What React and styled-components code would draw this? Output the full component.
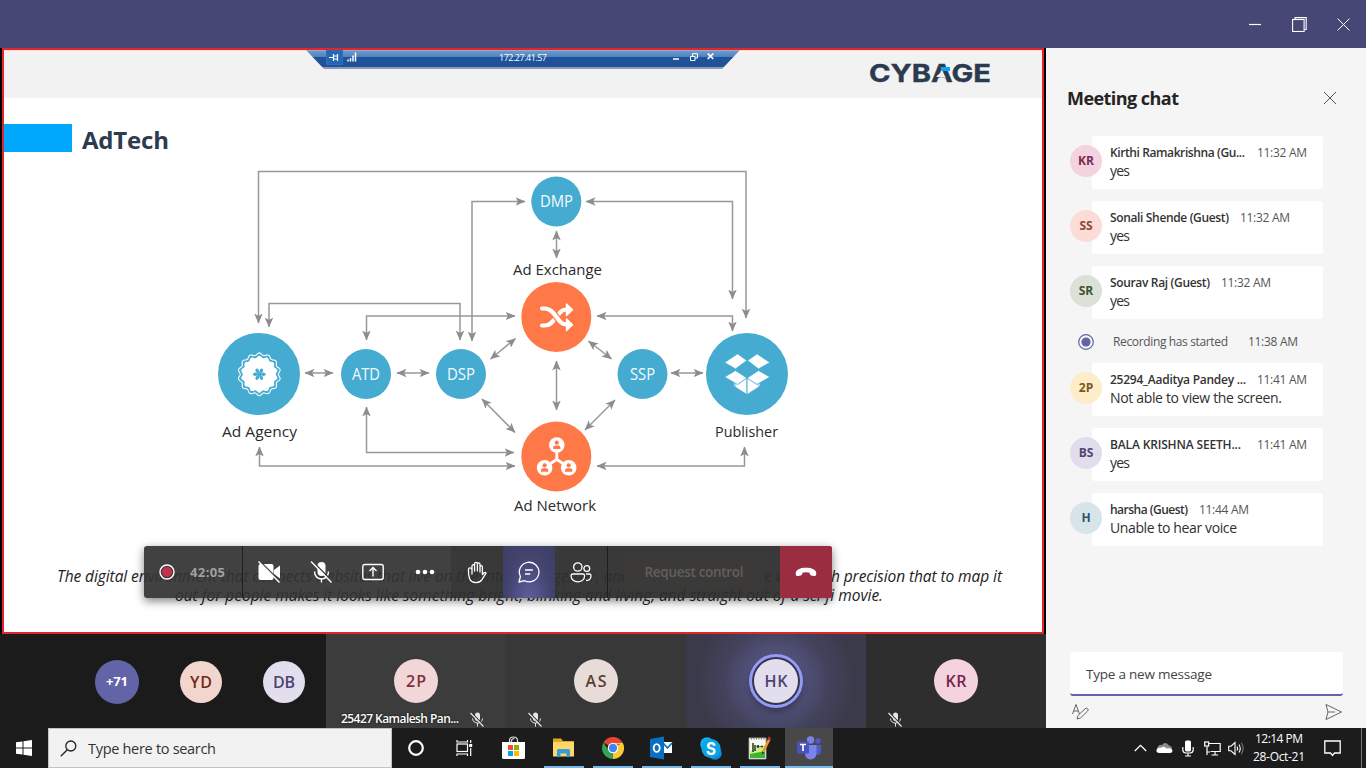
import React, { useLayoutEffect, useRef } from "react";
import styled, { createGlobalStyle, css } from "styled-components";

const sans = `"Open Sans", "Noto Sans", "Liberation Sans", sans-serif`;

const Global = createGlobalStyle`
  * { box-sizing: border-box; }
  body { margin: 0; background: #000; font-family: ${sans}; overflow: hidden; }
  svg { display: block; }
`;

/* Text tracked out (or in) so that it fills the given width. */
const TextLine = styled.span`
  display: inline-block;
  white-space: pre;
  flex: none;
  font-size: ${(p) => p.$size}px;
  font-weight: ${(p) => p.$weight || 400};
  font-style: ${(p) => (p.$italic ? "italic" : "normal")};
  color: ${(p) => p.$color || "inherit"};
  line-height: ${(p) => p.$line || p.$size + 4}px;
`;

function Fit({ width, children, ...rest }) {
  const ref = useRef(null);
  useLayoutEffect(() => {
    const el = ref.current;
    el.style.letterSpacing = "0px";
    const natural = el.getBoundingClientRect().width;
    el.style.letterSpacing = `${(width - natural) / Math.max(1, children.length - 1)}px`;
    el.style.marginRight = `${-(width - natural) / Math.max(1, children.length - 1)}px`;
  }, [width, children]);
  return (
    <TextLine ref={ref} {...rest}>
      {children}
    </TextLine>
  );
}

const Screen = styled.div`
  width: 1366px;
  height: 768px;
  display: grid;
  grid-template-rows: 48px 680px 40px;
`;

/* ---------- title bar ---------- */
const TitleBar = styled.header`
  background: #464775;
  display: flex;
  justify-content: flex-end;
  align-items: center;
  gap: 30px;
  padding-right: 16px;
`;

const Workspace = styled.main`
  display: grid;
  grid-template-columns: 1046px 320px;
`;

const Stage = styled.section`
  display: grid;
  grid-template-rows: 586px 94px;
  min-width: 0;
`;

const SharedFrame = styled.div`
  background: #000;
  padding: 0 2px;
`;

const Slide = styled.article`
  position: relative;
  height: 586px;
  border: 2px solid #e0262b;
  background: #fff;
  overflow: hidden;
  display: flex;
  flex-direction: column;
`;

const SlideHeader = styled.div`
  height: 48px;
  flex: none;
  background: #f2f2f2;
  box-shadow: inset 0 1px #f7dcdc;
  display: flex;
  justify-content: flex-end;
  padding: 6px 50px 0 0;
`;

const SlideTitle = styled.div`
  height: 54px;
  margin-top: 26px;
  flex: none;
  display: flex;
  align-items: flex-start;
  gap: 10px;
`;
const TitleAccent = styled.i`
  width: 68px;
  height: 28px;
  background: #00a8fb;
`;

const DiagramArea = styled.div`
  margin-top: -18px;
  height: 380px;
  flex: none;
`;

const Caption = styled.div`
  margin-top: 27px;
  display: flex;
  flex-direction: column;
  align-items: flex-start;
`;
const CaptionRow = styled.div`
  display: flex;
  height: 19px;
  padding-left: ${(p) => p.$indent}px;
`;

/* ---------- remote desktop bar ---------- */
const RemoteBar = styled.div`
  position: absolute;
  left: 302px;
  top: 0;
  width: 434px;
  height: 19px;
  clip-path: polygon(0 0, 100% 0, 416px 100%, 18px 100%);
  background: linear-gradient(#a2a6c4 0 1px, #6a9bd0 1px, #4b82bf 7px, #20529a 7px, #20529a 17px, #8e99b8 17px);
  display: flex;
  align-items: flex-start;
  color: #fff;
`;
const RemotePin = styled.span`
  margin-left: 20px;
  width: 17px;
  height: 15px;
  display: grid;
  place-items: center;
  border: 1px solid #2d6fbd;
  background: #2467b3;
`;
const RemoteSlot = styled.span`
  display: flex;
  margin-left: ${(p) => p.$gap}px;
  margin-top: ${(p) => p.$top}px;
`;

/* ---------- call controls ---------- */
const CallBar = styled.div`
  position: absolute;
  left: 140px;
  top: 496px;
  width: 688px;
  height: 52px;
  display: flex;
  border-radius: 3px;
  overflow: hidden;
  background: rgba(51, 51, 51, 0.93);
  box-shadow: 0 3px 10px rgba(0, 0, 0, 0.5);
`;
const RecordStatus = styled.div`
  width: 99px;
  border-right: 1px solid #1e1e1e;
  display: flex;
  align-items: center;
  gap: 15px;
  padding-left: 15px;
`;
const CallButton = styled.div`
  width: 52px;
  display: grid;
  place-items: center;
  ${(p) => p.$dim && css`background: rgba(40, 40, 40, 0.3);`}
  ${(p) => p.$active && css`background: radial-gradient(ellipse at 50% 110%, #5f5fa0, #43446f 60%, #3d3e62);`}
  ${(p) => p.$danger && css`background: #9b2d41;`}
`;
const ControlRequest = styled.div`
  width: 173px;
  border-left: 1px solid #1e1e1e;
  background: rgba(40, 40, 40, 0.3);
  padding: 10px 16px;
`;
const RequestButton = styled.div`
  height: 32px;
  background: #3b3a39;
  border-radius: 3px;
  display: grid;
  place-items: center;
  padding-top: 2px;
`;

/* ---------- participants ---------- */
const Gallery = styled.div`
  display: grid;
  grid-template-columns: 326px repeat(4, 180px);
`;
const Overflow = styled.div`
  background: #1b1b1b;
  display: flex;
  align-items: center;
  padding: 1px 0 0 95px;
  gap: 41px;
`;
const Tile = styled.div`
  height: 94px;
  background: ${(p) => p.$bg};
  display: flex;
  flex-direction: column;
  align-items: center;
  padding-top: 25px;
`;
const Avatar = styled.div`
  width: ${(p) => p.$d}px;
  height: ${(p) => p.$d}px;
  flex: none;
  border-radius: 50%;
  background: ${(p) => p.$bg};
  color: ${(p) => p.$fg};
  display: grid;
  place-items: center;
  ${(p) => p.$speaking && css`box-shadow: 0 0 0 2px #35354b, 0 0 0 5px #9599f7, 0 5px 10px 3px rgba(25, 25, 40, 0.6);`}
`;
const TileFooter = styled.div`
  align-self: stretch;
  display: flex;
  align-items: center;
  height: 16px;
  margin-top: 8px;
  padding-left: ${(p) => p.$indent}px;
  gap: 11px;
  text-shadow: 0 0 2px #000;
`;

/* ---------- chat ---------- */
const Chat = styled.aside`
  background: #f5f5f5;
  display: flex;
  flex-direction: column;
  padding: 0 23px 0 24px;
`;
const ChatHead = styled.div`
  height: 88px;
  display: flex;
  justify-content: space-between;
  align-items: flex-start;
  padding: 37px 6px 0 0;
  margin-left: -3px;
`;
const MessageList = styled.div`
  display: flex;
  flex-direction: column;
  gap: 12px;
`;
const Message = styled.div`
  display: flex;
  align-items: flex-start;
`;
const AvatarSlot = styled.div`
  width: 22px;
  padding-top: 9px;
  position: relative;
  z-index: 1;
`;
const Bubble = styled.div`
  width: 231px;
  height: 53px;
  background: #fff;
  border-radius: 3px;
  padding: 7px 0 0 18px;
  display: flex;
  flex-direction: column;
  align-items: flex-start;
`;
const MessageMeta = styled.div`
  display: flex;
  height: 19px;
`;
const TimeGap = styled.i`
  width: ${(p) => p.$w}px;
`;
const SystemNote = styled.div`
  height: 20px;
  display: flex;
  align-items: center;
  padding: 1px 0 0 8px;
`;
const Compose = styled.div`
  margin-top: auto;
  height: 76px;
`;
const ComposeInput = styled.div`
  display: flex;
  height: 44px;
  background: #fff;
  border-bottom: 2px solid #6264a7;
  border-radius: 3px;
  padding: 12px 0 0 16px;
`;
const ComposeTools = styled.div`
  display: flex;
  justify-content: space-between;
  padding: 7px 1px 0 2px;
`;

/* ---------- taskbar ---------- */
const Taskbar = styled.footer`
  background: #1c1c1c;
  display: flex;
  color: #fff;
`;
const TaskCell = styled.div`
  width: ${(p) => p.$w || 49}px;
  display: flex;
  align-items: center;
  justify-content: center;
  ${(p) => p.$running && css`
    background-image: linear-gradient(#76b9ed, #76b9ed);
    background-size: ${p.$focused ? "100%" : "40px"} 2px;
    background-position: ${p.$focused ? "0" : "5px"} bottom;
    background-repeat: no-repeat;
  `}
  ${(p) => p.$focused && css`
    background-color: #484848;
    margin-left: 1px;
  `}
`;
const SearchBox = styled.div`
  width: 344px;
  border: 1px solid #c2c2c2;
  background: #f2f2f2;
  display: flex;
  align-items: center;
  padding: 1px 0 0 11px;
  gap: 11px;
`;
const Tray = styled.div`
  margin-left: auto;
  display: flex;
  align-items: center;
  padding-right: 4px;
`;
const TrayItem = styled.span`
  margin-right: ${(p) => p.$after}px;
`;
const Clock = styled.div`
  display: flex;
  flex-direction: column;
  align-items: center;
  width: 52px;
  margin-right: 19px;
`;
const ShowDesktop = styled.i`
  width: 1px;
  align-self: stretch;
  background: #777;
`;

function Icon({ w, h, children, ...rest }) {
  return (
    <svg width={w} height={h} viewBox={`0 0 ${w} ${h}`} fill="none" stroke="currentColor" {...rest}>
      {children}
    </svg>
  );
}

/* ---------- diagram ---------- */
const BLUE = "#45abd0";
const ORANGE = "#ff7848";

const LINKS = [
  "M258.5 323V171.5H746V318",
  "M472 341V201.5H525",
  "M269 327V303.5H460V340",
  "M366.5 340V316H515",
  "M586 201.5H732.5V299",
  "M597 316H732.5V331",
  "M556.5 231V258",
  "M305 373H333",
  "M397 373H429",
  "M490.5 359L515.5 338.5",
  "M588.5 341L611.5 359",
  "M556.5 361V410",
  "M482 399L515 432.5",
  "M615 400L585 430",
  "M671 373H703",
  "M597 466H744.5V447",
  "M366.5 407V452.5H514",
  "M259.5 447V466H515",
];

function scallop(r, amp, n) {
  const pts = [];
  for (let i = 0; i <= 180; i++) {
    const a = (i / 180) * Math.PI * 2;
    const rr = r + amp * Math.cos(a * n);
    pts.push(`${(rr * Math.sin(a)).toFixed(2)} ${(-rr * Math.cos(a)).toFixed(2)}`);
  }
  return `M${pts.join("L")}Z`;
}

function NodeText({ x, y, w, children }) {
  return (
    <text x={x - w / 2} y={y} textLength={w} lengthAdjust="spacingAndGlyphs" fill="#f4fbfd" fontSize="16">
      {children}
    </text>
  );
}
function NodeLabel({ x, y, w, children }) {
  return (
    <text x={x} y={y} textLength={w} lengthAdjust="spacingAndGlyphs" fill="#2b2b2b" fontSize="15">
      {children}
    </text>
  );
}

function Person({ x, y }) {
  return (
    <g>
      <circle cx={x} cy={y} r="7.8" fill="#fff" />
      <circle cx={x} cy={y - 2.3} r="2.1" fill={ORANGE} />
      <path d={`M${x - 3.6} ${y + 4}v-1.6q0-1.8 1.8-1.8h3.6q1.8 0 1.8 1.8v1.6z`} fill={ORANGE} />
    </g>
  );
}

function Diagram() {
  return (
    <svg width="1038" height="380" viewBox="4 160 1038 380" fontFamily={sans}>
      <defs>
        <marker id="tip" markerUnits="userSpaceOnUse" markerWidth="12" markerHeight="12" refX="9.5" refY="5" orient="auto-start-reverse">
          <path d="M0 0.7L10 5L0 9.3L2.4 5Z" fill="#8d8d8d" />
        </marker>
      </defs>
      {LINKS.map((d) => (
        <path key={d} d={d} fill="none" stroke="#989898" strokeWidth="1.5" markerStart="url(#tip)" markerEnd="url(#tip)" />
      ))}
      <circle cx="259" cy="374" r="41" fill={BLUE} />
      <circle cx="366" cy="374" r="25" fill={BLUE} />
      <circle cx="461" cy="374" r="25" fill={BLUE} />
      <circle cx="642.5" cy="374" r="25" fill={BLUE} />
      <circle cx="556.3" cy="201.5" r="25" fill={BLUE} />
      <circle cx="747" cy="374" r="41" fill={BLUE} />
      <circle cx="556.3" cy="317" r="35" fill={ORANGE} />
      <circle cx="556.3" cy="456.5" r="35" fill={ORANGE} />

      <g transform="translate(259.3 374.3)">
        <path d={scallop(20.2, 1.1, 14)} fill="none" stroke="#fff" strokeWidth="1.1" />
        <path d={scallop(17.5, 1, 14)} fill="#fff" />
        {[0, 60, 120, 180, 240, 300].map((a) => (
          <ellipse key={a} cx="0" cy="-4" rx="1.7" ry="2.3" fill={BLUE} transform={`rotate(${a + 30})`} />
        ))}
        <circle r="2.2" fill={BLUE} />
      </g>

      <g fill="none" stroke="#fff" strokeWidth="4.2" strokeLinecap="round">
        <path d="M542 325.500h3c5 0 8-4 11.500-8.500s5-7.500 10-7.500h2" />
        <path d="M545 308.500c5 0 8 4 11.500 8.500s5 7.500 10 7.500" stroke={ORANGE} strokeWidth="6.500" strokeLinecap="butt" />
        <path d="M542 308.500h3c5 0 8 4 11.500 8.500s5 7.500 10 7.500h2" />
      </g>
      <path d="M566.500 304l6 5.700-6 5.700zM566.500 319l6 5.700-6 5.700z" fill="#fff" stroke="#fff" strokeWidth="1.400" strokeLinejoin="round" />

      <path d="M556.800 447V459.500L545 467M556.800 459.500L568.500 467" stroke="#fff" strokeWidth="2.800" fill="none" />
      <Person x={556.8} y={445} />
      <Person x={544.6} y={467.7} />
      <Person x={568.7} y={467.7} />

      <g fill="#fff" stroke={BLUE} strokeWidth="0.900">
        <path d="M733.500 379L746.700 387.500V394.800L733.500 386Z" />
        <path d="M760.500 379L747.300 387.500V394.800L760.500 386Z" />
        <path d="M735 379L747 378V394.500L735 387Z" />
        <path d="M759 379L747 378V394.500L759 387Z" />
        <path d="M737.500 353.800L747 360.500L735.500 369L724.500 362.500Z" />
        <path d="M757 353.800L747.500 360.500L758.500 369L770 362.500Z" />
        <path d="M735.500 370.500L747 378L737.500 384.500L724.500 377Z" />
        <path d="M758.500 370.500L747 378L757 384.500L770 377Z" />
      </g>

      <NodeText x={556.5} y={207} w={33}>DMP</NodeText>
      <NodeText x={366} y={379.5} w={28}>ATD</NodeText>
      <NodeText x={461} y={379.5} w={28}>DSP</NodeText>
      <NodeText x={642.5} y={379.5} w={25}>SSP</NodeText>
      <NodeLabel x={513} y={275} w={89}>Ad Exchange</NodeLabel>
      <NodeLabel x={222} y={437} w={75}>Ad Agency</NodeLabel>
      <NodeLabel x={715} y={437} w={63}>Publisher</NodeLabel>
      <NodeLabel x={514} y={511} w={82}>Ad Network</NodeLabel>
    </svg>
  );
}

function CybageLogo() {
  return (
    <svg width="124" height="36" viewBox="868 56 124 36">
      <text x="869" y="82" textLength="122" lengthAdjust="spacingAndGlyphs" fontFamily="Inter, sans-serif" fontWeight="700" fontSize="24.500" fill="#2c3a4f" stroke="#2c3a4f" strokeWidth="0.400">
        CYBAGE
      </text>
      <path d="M936 76.500L942 71.500L946 77.500L941 77.800Z" fill="#f2f2f2" />
      <path d="M940.500 67H950V71H941.500Z" fill="#05a8f5" />
    </svg>
  );
}

function MutedMic() {
  return (
    <Icon w={14} h={15} color="#e6e6e6">
      <rect x="5" y="0.500" width="5" height="8.500" rx="2.500" fill="currentColor" stroke="none" />
      <path d="M2.500 6.500c0 6 10 6 10 0M7.500 11v3.500" />
      <path d="M1 0.500L14 14" stroke="#333" strokeWidth="1.800" />
      <path d="M0.500 1L13.500 14.500" strokeWidth="1.200" />
    </Icon>
  );
}

const MESSAGES = [
  { who: "KR", bg: "#f4d2de", fg: "#762d54", name: "Kirthi Ramakrishna (Gu...", nw: 135, gap: 12, time: "11:32 AM", text: "yes", tw: 20 },
  { who: "SS", bg: "#fbdcd6", fg: "#8e4639", name: "Sonali Shende (Guest)", nw: 119, gap: 11, time: "11:32 AM", text: "yes", tw: 20 },
  { who: "SR", bg: "#dbe1d6", fg: "#40532e", name: "Sourav Raj (Guest)", nw: 100, gap: 11, time: "11:32 AM", text: "yes", tw: 20 },
  { note: "Recording has started", time: "11:38 AM" },
  { who: "2P", bg: "#fdeec8", fg: "#7a5a1c", name: "25294_Aaditya Pandey ...", nw: 136, gap: 11, time: "11:41 AM", text: "Not able to view the screen.", tw: 172 },
  { who: "BS", bg: "#e2ddec", fg: "#514672", name: "BALA KRISHNA SEETH...", nw: 131, gap: 16, time: "11:41 AM", text: "yes", tw: 20 },
  { who: "H", bg: "#d7e4e9", fg: "#2b5566", name: "harsha (Guest)", nw: 78, gap: 11, time: "11:44 AM", text: "Unable to hear voice", tw: 127 },
];

function ChatMessage({ m }) {
  if (m.note) {
    return (
      <SystemNote>
        <Icon w={16} h={16} color="#6264a7">
          <circle cx="8" cy="8" r="7.300" strokeWidth="1.200" />
          <circle cx="8" cy="8" r="4.600" fill="currentColor" stroke="none" />
        </Icon>
        <TimeGap $w={19} />
        <Fit $size={12} $line={18} $color="#555" width={115}>{m.note}</Fit>
        <TimeGap $w={20} />
        <Fit $size={12} $line={18} $color="#555" width={50}>{m.time}</Fit>
      </SystemNote>
    );
  }
  return (
    <Message>
      <AvatarSlot>
        <Avatar $d={32} $bg={m.bg} $fg={m.fg}>
          <TextLine $size={12} $weight={700}>{m.who}</TextLine>
        </Avatar>
      </AvatarSlot>
      <Bubble>
        <MessageMeta>
          <Fit $size={12} $line={19} $weight={600} $color="#333" width={m.nw}>{m.name}</Fit>
          <TimeGap $w={m.gap} />
          <Fit $size={12} $line={19} $color="#555" width={50}>{m.time}</Fit>
        </MessageMeta>
        <Fit $size={14} $line={18} $color="#2f2f2f" width={m.tw}>{m.text}</Fit>
      </Bubble>
    </Message>
  );
}

export default function App() {
  return (
    <Screen>
      <Global />
      <TitleBar>
        <Icon w={14} h={14} color="#fff"><path d="M1 7.500h12" strokeWidth="1.200" /></Icon>
        <Icon w={15} h={15} color="#fff" strokeWidth="1.100">
          <rect x="0.600" y="2.500" width="11.500" height="12" />
          <path d="M3 2.500V0.600H14.200V12.500H12" />
        </Icon>
        <Icon w={13} h={13} color="#fff"><path d="M0.500 0.500L12.500 12.500M12.500 0.500L0.500 12.500" /></Icon>
      </TitleBar>

      <Workspace>
        <Stage>
          <SharedFrame>
            <Slide>
              <SlideHeader><CybageLogo /></SlideHeader>
              <SlideTitle>
                <TitleAccent />
                <Fit $size={24} $line={31} $weight={700} $color="#2d3b4e" width={87}>AdTech</Fit>
              </SlideTitle>
              <DiagramArea><Diagram /></DiagramArea>
              <Caption>
                <CaptionRow $indent={53}>
                  <Fit $size={15.5} $line={19} $italic $color="#222" width={945}>
                    {"The digital environment that connects websites that live on the Internet together, and communicates there with such precision that to map it"}
                  </Fit>
                </CaptionRow>
                <CaptionRow $indent={171}>
                  <Fit $size={15.5} $line={19} $italic $color="#222" width={708}>
                    {"out for people makes it looks like something bright, blinking and living, and straight out of a sci-fi movie."}
                  </Fit>
                </CaptionRow>
              </Caption>

              <RemoteBar>
                <RemotePin>
                  <Icon w={11} h={9}>
                    <path d="M0 4.500H4M4.500 1V8M4.500 3H8.500M4.500 6H8.500M8.500 1V8" strokeWidth="1.200" />
                  </Icon>
                </RemotePin>
                <RemoteSlot $gap={4} $top={2}>
                  <Icon w={10} h={10} strokeWidth="1.500"><path d="M1 9.500V7.500M3.500 9.500V6M6 9.500V3.500M8.500 9.500V0.500" /></Icon>
                </RemoteSlot>
                <RemoteSlot $gap={142} $top={1}>
                  <Fit $size={9} $line={13} width={48}>172.27.41.57</Fit>
                </RemoteSlot>
                <RemoteSlot $gap={126} $top={2}>
                  <Icon w={6} h={9}><path d="M0 7H6" strokeWidth="1.600" /></Icon>
                </RemoteSlot>
                <RemoteSlot $gap={11} $top={3}>
                  <Icon w={8} h={8}><path d="M0.500 3.500H5V7.500H0.500ZM2.500 3V0.700H7.500V5H5" /></Icon>
                </RemoteSlot>
                <RemoteSlot $gap={9} $top={3}>
                  <Icon w={7} h={7}><path d="M0.700 0.500L6.300 6M6.300 0.500L0.700 6" strokeWidth="1.700" /></Icon>
                </RemoteSlot>
              </RemoteBar>

              <CallBar>
                <RecordStatus>
                  <Icon w={16} h={16}>
                    <circle cx="8" cy="8" r="7" stroke="#fff" strokeWidth="1.400" />
                    <circle cx="8" cy="8" r="5" fill="#c4314b" stroke="none" />
                  </Icon>
                  <Fit $size={13} $weight={700} $color="#a0a0a0" width={35}>42:05</Fit>
                </RecordStatus>
                <CallButton>
                  <Icon w={24} h={22} color="#fff">
                    <rect x="1.500" y="3" width="15" height="16" rx="2" fill="currentColor" stroke="none" />
                    <path d="M17 9L23 4.500V17.500L17 13Z" fill="currentColor" stroke="none" />
                    <path d="M2.500 0L23.500 21" stroke="#424242" strokeWidth="1.600" />
                    <path d="M1.500 0.500L22.500 21.500" strokeWidth="1.400" />
                  </Icon>
                </CallButton>
                <CallButton>
                  <Icon w={22} h={22} color="#fff">
                    <rect x="7.500" y="1" width="8" height="14" rx="4" fill="currentColor" stroke="none" />
                    <path d="M4.500 10.500c0 10 14 10 14 0M11.500 18v3.500" strokeWidth="1.400" />
                    <path d="M2 0L22.500 20.500" stroke="#424242" strokeWidth="1.600" />
                    <path d="M1 0.500L21.500 21.500" strokeWidth="1.400" />
                  </Icon>
                </CallButton>
                <CallButton>
                  <Icon w={22} h={18} color="#fff" strokeWidth="1.400">
                    <rect x="0.800" y="1.500" width="20.400" height="15" rx="2" />
                    <path d="M11 13.500V5M7.500 8L11 4.500L14.500 8" />
                  </Icon>
                </CallButton>
                <CallButton>
                  <Icon w={20} h={6} fill="#fff" stroke="none">
                    <circle cx="3" cy="3" r="2.300" /><circle cx="10" cy="3" r="2.300" /><circle cx="17" cy="3" r="2.300" />
                  </Icon>
                </CallButton>
                <CallButton $dim>
                  <Icon w={20} h={23} color="#fff" strokeWidth="1.300" strokeLinejoin="round" strokeLinecap="round">
                    <path d="M5 13V5.200q0-1.500 1.300-1.500T7.600 5.200V10V2.800q0-1.500 1.400-1.500t1.400 1.500V9.800V3.200q0-1.400 1.300-1.400T13 3.200V11V6q0-1.300 1.200-1.300T15.400 6v7.500l1.700-1.700q1.200-.900 1.900.300l-4 6.500q-2 3-6 3-5 0-6.500-4-1.300-4-1-9.200q.2-1.500 1.500-1.500T5 8.500" />
                  </Icon>
                </CallButton>
                <CallButton $active>
                  <Icon w={22} h={22} color="#fff" strokeWidth="1.300" strokeLinejoin="round" strokeLinecap="round">
                    <path d="M1 21L2.400 15.500A9.800 9.800 0 1 1 6.500 19.700Z" />
                    <path d="M7.500 9H14.500M7.500 13H11.800" />
                  </Icon>
                </CallButton>
                <CallButton $dim>
                  <Icon w={22} h={21} color="#fff" strokeWidth="1.300">
                    <circle cx="7.800" cy="5" r="4.200" />
                    <circle cx="16.800" cy="6.500" r="2.900" />
                    <path d="M1 13.800q0-1.800 1.800-1.800h10q1.800 0 1.800 1.800c0 8-13.600 8-13.600 0ZM16 12h3.200q1.800 0 1.800 1.800c0 3.500-2 4.800-5 4.700" />
                  </Icon>
                </CallButton>
                <ControlRequest>
                  <RequestButton>
                    <Fit $size={13.5} $weight={600} $color="#605f5e" width={99}>Request control</Fit>
                  </RequestButton>
                </ControlRequest>
                <CallButton $danger>
                  <Icon w={22} h={10} fill="#fff" stroke="none">
                    <path d="M11 0.700C16.500 0.700 21.500 2.500 21.300 6.500C21.200 8.500 20.300 9.300 18.800 9L16.500 8.600C15 8.300 14.800 7.300 14.600 5.800C12.500 5 9.500 5 7.400 5.800C7.200 7.300 7 8.300 5.500 8.600L3.200 9C1.700 9.300 0.800 8.500 0.700 6.500C0.500 2.500 5.500 0.700 11 0.700Z" />
                  </Icon>
                </CallButton>
              </CallBar>
            </Slide>
          </SharedFrame>

          <Gallery>
            <Overflow>
              <Avatar $d={44} $bg="#6264a7" $fg="#fff"><Fit $size={13} $weight={700} width={22}>+71</Fit></Avatar>
              <Avatar $d={42} $bg="#f2d6cd" $fg="#6f2a1b"><Fit $size={16} $weight={600} width={22}>YD</Fit></Avatar>
              <Avatar $d={42} $bg="#e2deed" $fg="#4c4370"><Fit $size={16} $weight={600} width={22}>DB</Fit></Avatar>
            </Overflow>
            <Tile $bg="#3c3c3c">
              <Avatar $d={44} $bg="#f3d6d8" $fg="#7a323d"><Fit $size={16} $weight={600} width={20}>2P</Fit></Avatar>
              <TileFooter $indent={15}>
                <Fit $size={12} $line={18} $weight={600} $color="#fff" width={118}>25427 Kamalesh Pan...</Fit>
                <MutedMic />
              </TileFooter>
            </Tile>
            <Tile $bg="#383838">
              <Avatar $d={44} $bg="#e8dcd8" $fg="#5b3d31"><Fit $size={16} $weight={600} width={21}>AS</Fit></Avatar>
              <TileFooter $indent={22}><MutedMic /></TileFooter>
            </Tile>
            <Tile $bg="radial-gradient(circle at 50% 50%, #5c5c8e 0, #52527b 28px, #43425d 52px, #3b3a4a 80px)">
              <Avatar $d={44} $bg="#e2deed" $fg="#4c4370" $speaking><Fit $size={16} $weight={600} width={23}>HK</Fit></Avatar>
            </Tile>
            <Tile $bg="#2e2e2e">
              <Avatar $d={44} $bg="#f4d3df" $fg="#75224a"><Fit $size={16} $weight={600} width={21}>KR</Fit></Avatar>
              <TileFooter $indent={22}><MutedMic /></TileFooter>
            </Tile>
          </Gallery>
        </Stage>

        <Chat>
          <ChatHead>
            <Fit $size={18} $line={27} $weight={700} $color="#252423" width={112}>Meeting chat</Fit>
            <Icon w={14} h={26} color="#555"><path d="M1 7L13 19M13 7L1 19" /></Icon>
          </ChatHead>
          <MessageList>
            {MESSAGES.map((m, i) => <ChatMessage key={i} m={m} />)}
          </MessageList>
          <Compose>
            <ComposeInput><Fit $size={13.5} $line={20} $color="#444" width={126}>Type a new message</Fit></ComposeInput>
            <ComposeTools>
              <Icon w={18} h={18} color="#666">
                <path d="M0.500 11L4 1.500L7.500 11M1.700 8H6M5 16L6 12.500L13 5.800Q14.500 4.500 15.700 5.700T15.500 8.200L8.500 15Z" />
              </Icon>
              <Icon w={17} h={18} color="#666" strokeLinejoin="round">
                <path d="M1 1.500L16.500 9L1 16.500L3 9ZM3 9H10" />
              </Icon>
            </ComposeTools>
          </Compose>
        </Chat>
      </Workspace>

      <Taskbar>
        <TaskCell $w={48}>
          <Icon w={16} h={16} fill="#fff" stroke="none">
            <path d="M0 2.300L6.500 1.400V7.500H0ZM7.500 1.200L16 0V7.500H7.500ZM0 8.500H6.500V14.600L0 13.700ZM7.500 8.500H16V16L7.500 14.800Z" />
          </Icon>
        </TaskCell>
        <SearchBox>
          <Icon w={17} h={17} color="#222" strokeWidth="1.300"><circle cx="10.800" cy="6" r="5" /><path d="M7.300 9.700L0.800 16.200" /></Icon>
          <Fit $size={14.5} $line={20} $color="#333" width={128}>Type here to search</Fit>
        </SearchBox>
        <TaskCell $w={48}>
          <Icon w={18} h={18}><circle cx="9" cy="9" r="6.800" stroke="#fff" strokeWidth="2.200" /></Icon>
        </TaskCell>
        <TaskCell $w={48}>
          <Icon w={17} h={16} color="#fff" strokeWidth="1.200">
            <rect x="1" y="4" width="10.500" height="7.500" /><path d="M1 0V2H11.500V0M1 16V14H11.500V16M14.700 0V3M14.700 8V16" /><path d="M13.200 5.500h3" strokeWidth="3" />
          </Icon>
        </TaskCell>
        <TaskCell $w={51}>
          <Icon w={23} h={24}>
            <path d="M7.500 7V4.500Q7.500 1 11.500 1T15.500 4.500V7M9.500 7V5Q9.500 2.500 12.500 2.500" stroke="#ddd" strokeWidth="1.200" />
            <path d="M0 6H23V21.500Q23 23 21.500 23H1.500Q0 23 0 21.500Z" fill="#fff" stroke="none" />
            <g stroke="none"><path d="M6 9h5v5H6z" fill="#f25022" /><path d="M12 9h5v5h-5z" fill="#7fba00" /><path d="M6 15h5v5H6z" fill="#00a4ef" /><path d="M12 15h5v5h-5z" fill="#ffb900" /></g>
          </Icon>
        </TaskCell>
        <TaskCell $running>
          <Icon w={22} h={20} stroke="none">
            <path d="M0 0.500H8L10 3H21V18H0Z" fill="#e8a51c" /><path d="M0 4H21V18.500H0Z" fill="#ffd869" />
            <path d="M4 19V12.500Q4 11 5.500 11H15.500Q17 11 17 12.500V19H13.500V15.500H7.500V19Z" fill="#3a9bdc" />
          </Icon>
        </TaskCell>
        <TaskCell $running>
          <Icon w={22} h={22} stroke="none">
            <path d="M11 11L1.500 5.500A11 11 0 0 1 20.500 5.500Z" fill="#ea4335" />
            <path d="M11 11L20.500 5.500A11 11 0 0 1 10.500 22Z" fill="#fbc933" />
            <path d="M11 11L10.500 22A11 11 0 0 1 1.500 5.500L6.500 13.500Z" fill="#34a353" />
            <path d="M11 6H20.800L21 7H12Z" fill="#fbc933" />
            <circle cx="11" cy="11" r="5.300" fill="#fff" /><circle cx="11" cy="11" r="4.200" fill="#4285f4" />
          </Icon>
        </TaskCell>
        <TaskCell $running>
          <Icon w={23} h={24} stroke="none">
            <path d="M13 6H22V17H13Z" fill="#fff" /><path d="M13 7L17.500 12L22 7" stroke="#0a72c6" strokeWidth="1.800" fill="none" />
            <path d="M0 3L14 0.500V23.500L0 21Z" fill="#0a6fc2" /><ellipse cx="6.700" cy="12" rx="3" ry="3.900" stroke="#fff" strokeWidth="1.900" fill="none" />
          </Icon>
        </TaskCell>
        <TaskCell $running>
          <Icon w={22} h={23} stroke="none">
            <circle cx="7" cy="7" r="6.800" fill="#13b0ef" /><circle cx="15" cy="16" r="6.800" fill="#0c8ad8" /><circle cx="11" cy="11.500" r="9.600" fill="#0ba4e6" />
            <text x="6" y="18" fontFamily="Inter, sans-serif" fontWeight="700" fontSize="17" textLength="10" lengthAdjust="spacingAndGlyphs" fill="#fff">S</text>
          </Icon>
        </TaskCell>
        <TaskCell $running>
          <Icon w={23} h={24} stroke="none">
            <path d="M1 2H18V23H1Z" fill="#f6f7f0" stroke="#aaa" strokeWidth="0.800" /><path d="M2 15L17 9V22H2Z" fill="#c9ee86" /><path d="M2 18L17 15V22H2Z" fill="#3eb52c" />
            <path d="M3 2.500H17" stroke="#777" strokeWidth="2" strokeDasharray="1 1.500" />
            <path d="M5 7V16M7 9V15M8.500 10.500H11.500M10 9V12M12.500 10.500H15" stroke="#233a18" strokeWidth="1.500" />
            <path d="M21.500 3L15 16" stroke="#e99b22" strokeWidth="2.600" /><path d="M21.700 1L20.600 3.800" stroke="#b2303a" strokeWidth="2.600" /><path d="M14 18.500L14 15.500L16.500 16.500Z" fill="#333" />
          </Icon>
        </TaskCell>
        <TaskCell $w={48} $running $focused>
          <Icon w={24} h={24} stroke="none">
            <circle cx="21" cy="5" r="2.700" fill="#5059c9" /><path d="M17 9H24V15Q24 19 20 19L17 18Z" fill="#5059c9" />
            <circle cx="13.500" cy="4" r="3.700" fill="#7b83eb" /><path d="M8 9H19.500V17Q19 23.500 13.500 23.500Q8.500 23 8 18Z" fill="#7b83eb" />
            <rect x="0" y="5.500" width="12" height="12" rx="1" fill="#4a52bd" /><path d="M3 8.500H9M6 8.500V15" stroke="#fff" strokeWidth="1.700" />
          </Icon>
        </TaskCell>

        <Tray>
          <TrayItem $after={9}><Icon w={13} h={8}><path d="M0.800 7L6.500 1.300L12.200 7" strokeWidth="1.300" /></Icon></TrayItem>
          <TrayItem $after={9}>
            <Icon w={17} h={12} stroke="none"><path d="M1 6Q3 2 6 3Q9-1 13 3.500Q16 4 16 7L9 9Z" fill="#8b8b8b" /><path d="M3.500 11Q0 11 0.500 8T5 5.800Q8 3.500 10.500 6.500Q16 5.500 16.500 8.800Q16.500 11 14 11Z" fill="#fff" /></Icon>
          </TrayItem>
          <TrayItem $after={10}>
            <Icon w={12} h={17}><rect x="3" y="0.500" width="6" height="11" rx="1.500" fill="#fff" stroke="none" /><path d="M0.800 7V10Q1 13 4 13H8Q11 13 11.200 10V7M6 13V16M3 16H9" strokeWidth="1.200" /></Icon>
          </TrayItem>
          <TrayItem $after={7}>
            <Icon w={17} h={15} strokeWidth="1.200"><path d="M5 2.500H16.200V10.500H6.500M11 10.500V14M7.500 14H14M3 5.500V14M2.500 11H6" /><rect x="0.700" y="1" width="4" height="4" fill="#1c1c1c" /></Icon>
          </TrayItem>
          <TrayItem $after={8}>
            <Icon w={17} h={15} strokeWidth="1.100"><path d="M0.700 5.200H3L7 1.500V13.500L3 9.800H0.700ZM9 5.500Q10.200 7.500 9 9.500M11 3.500Q13.500 7.500 11 11.500" /><path d="M13.300 1.800Q17 7.500 13.300 13.200" stroke="#777" /></Icon>
          </TrayItem>
          <Clock>
            <Fit $size={12} $line={18} width={48}>12:14 PM</Fit>
            <Fit $size={12} $line={18} width={52}>28-Oct-21</Fit>
          </Clock>
          <TrayItem $after={20}>
            <Icon w={17} h={17} strokeWidth="1.300"><path d="M0.800 1H16.200V13H10.500L8.500 15.500L6.500 13H0.800Z" /></Icon>
          </TrayItem>
          <ShowDesktop />
        </Tray>
      </Taskbar>
    </Screen>
  );
}
